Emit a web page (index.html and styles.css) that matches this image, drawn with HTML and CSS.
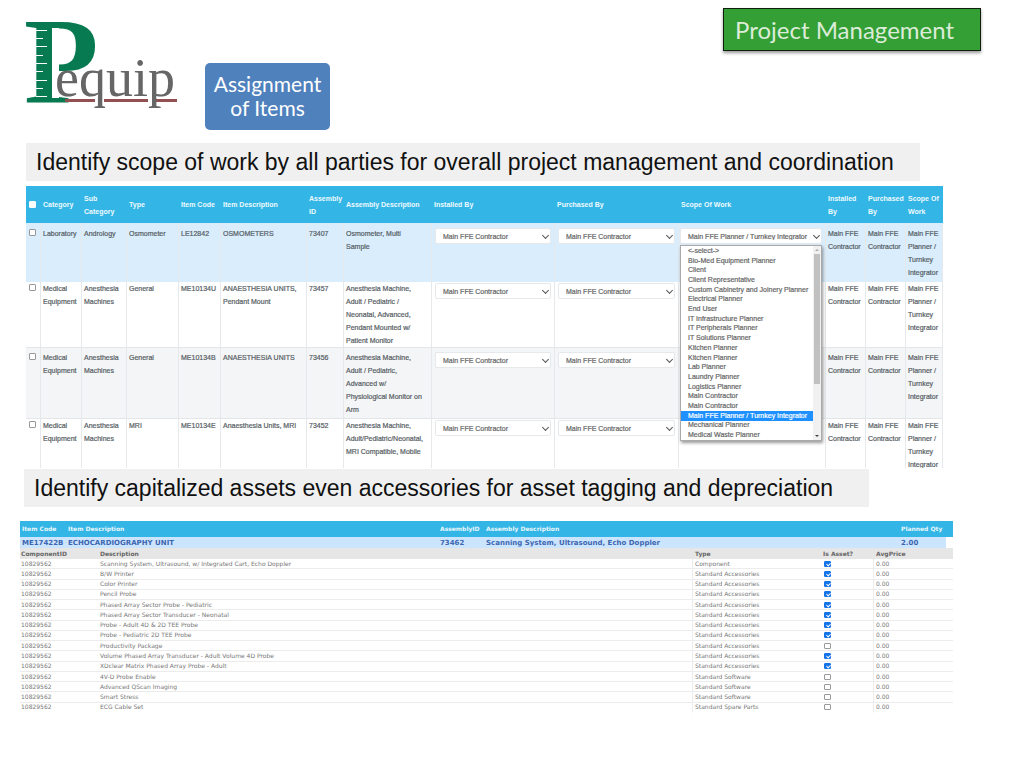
FILE: index.html
```html
<!DOCTYPE html>
<html lang="en">
<head>
<meta charset="utf-8">
<title>Pequip - Project Management</title>
<link rel="stylesheet" href="styles.css">
</head>
<body>
<header class="top">
  <svg class="logo" width="154" height="92" viewBox="24 20 154 92" role="img" aria-label="Pequip">
    <text class="logo-p" x="24" y="103">P</text>
    <g class="logo-ticks">
      <rect x="36" y="30" width="11" height="1"/><rect x="36" y="38" width="7" height="1"/>
      <rect x="36" y="46" width="11" height="1"/><rect x="36" y="55" width="7" height="1"/>
      <rect x="36" y="63" width="11" height="1"/><rect x="36" y="71" width="7" height="1"/>
      <rect x="36" y="80" width="11" height="1"/><rect x="36" y="88" width="7" height="1"/>
      <rect x="36" y="96" width="11" height="1"/><rect x="52" y="28" width="7" height="70"/>
    </g>
    <g class="logo-line">
      <rect x="65" y="99" width="30" height="3"/><rect x="104" y="99" width="44" height="3"/><rect x="155" y="99" width="22" height="3"/>
    </g>
    <text class="logo-word" x="55" y="96">equip</text>
  </svg>
  <h2 class="topic">Assignment<br>of Items</h2>
  <h1 class="banner">Project Management</h1>
</header>
<main>
  <p class="caption caption-scope">Identify scope of work by all parties for overall project management and coordination</p>
  <div class="scope-wrap">
    <table class="scope">
      <colgroup><col class="w15"><col class="w41"><col class="w45"><col class="w52"><col class="w42"><col class="w86"><col class="w37"><col class="w88"><col class="w123"><col class="w124"><col class="w147"><col class="w40"><col class="w40"><col class="w37"></colgroup>
      <thead>
        <tr><th><input type="checkbox" aria-label="Select all"></th><th>Category</th><th>Sub Category</th><th>Type</th><th>Item Code</th><th>Item Description</th><th>Assembly ID</th><th>Assembly Description</th><th>Installed By</th><th>Purchased By</th><th>Scope Of Work</th><th>Installed By</th><th>Purchased By</th><th>Scope Of Work</th></tr>
      </thead>
      <tbody>
        <tr class="picked roomy">
          <td><input type="checkbox" aria-label="Select LE12842"></td><td>Laboratory</td><td>Andrology</td><td>Osmometer</td><td>LE12842</td><td>OSMOMETERS</td><td>73407</td><td class="desc">Osmometer, Multi Sample</td>
          <td><div class="pick"><select aria-label="Installed by"><option>Main FFE Contractor</option></select></div></td>
          <td><div class="pick"><select aria-label="Purchased by"><option>Main FFE Contractor</option></select></div></td>
          <td class="open"><div class="pick"><select aria-label="Scope of work"><option>Main FFE Planner / Turnkey Integrator</option></select></div>
            <div class="menu">
              <ul role="listbox" aria-label="Scope of work options">
                <li role="option">&lt;-select-&gt;</li><li role="option">Bio-Med Equipment Planner</li><li role="option">Client</li><li role="option">Client Representative</li><li role="option">Custom Cabinetry and Joinery Planner</li><li role="option">Electrical Planner</li><li role="option">End User</li><li role="option">IT Infrastructure Planner</li><li role="option">IT Peripherals Planner</li><li role="option">IT Solutions Planner</li><li role="option">Kitchen Planner</li><li role="option">Kitchen Planner</li><li role="option">Lab Planner</li><li role="option">Laundry Planner</li><li role="option">Logistics Planner</li><li role="option">Main Contractor</li><li role="option">Main Contractor</li><li role="option" aria-selected="true" class="current">Main FFE Planner / Turnkey Integrator</li><li role="option">Mechanical Planner</li><li role="option">Medical Waste Planner</li>
              </ul>
              <div class="scroll"><i class="up"></i><i class="thumb"></i><i class="down"></i></div>
            </div>
          </td>
          <td>Main FFE Contractor</td><td>Main FFE Contractor</td><td>Main FFE Planner / Turnkey Integrator</td>
        </tr>
        <tr class="tight">
          <td><input type="checkbox" aria-label="Select ME10134U"></td><td>Medical Equipment</td><td>Anesthesia Machines</td><td>General</td><td>ME10134U</td><td>ANAESTHESIA UNITS, Pendant Mount</td><td>73457</td><td class="desc">Anesthesia Machine, Adult / Pediatric / Neonatal, Advanced, Pendant Mounted w/ Patient Monitor</td>
          <td><div class="pick"><select aria-label="Installed by"><option>Main FFE Contractor</option></select></div></td>
          <td><div class="pick"><select aria-label="Purchased by"><option>Main FFE Contractor</option></select></div></td>
          <td></td><td>Main FFE Contractor</td><td>Main FFE Contractor</td><td>Main FFE Planner / Turnkey Integrator</td>
        </tr>
        <tr class="shade roomy tall">
          <td><input type="checkbox" aria-label="Select ME10134B"></td><td>Medical Equipment</td><td>Anesthesia Machines</td><td>General</td><td>ME10134B</td><td>ANAESTHESIA UNITS</td><td>73456</td><td class="desc">Anesthesia Machine, Adult / Pediatric, Advanced w/ Physiological Monitor on Arm</td>
          <td><div class="pick"><select aria-label="Installed by"><option>Main FFE Contractor</option></select></div></td>
          <td><div class="pick"><select aria-label="Purchased by"><option>Main FFE Contractor</option></select></div></td>
          <td></td><td>Main FFE Contractor</td><td>Main FFE Contractor</td><td>Main FFE Planner / Turnkey Integrator</td>
        </tr>
        <tr class="tight">
          <td><input type="checkbox" aria-label="Select ME10134E"></td><td>Medical Equipment</td><td>Anesthesia Machines</td><td>MRI</td><td>ME10134E</td><td>Anaesthesia Units, MRI</td><td>73452</td><td class="desc">Anesthesia Machine, Adult/Pediatric/Neonatal, MRI Compatible, Mobile</td>
          <td><div class="pick"><select aria-label="Installed by"><option>Main FFE Contractor</option></select></div></td>
          <td><div class="pick"><select aria-label="Purchased by"><option>Main FFE Contractor</option></select></div></td>
          <td></td><td>Main FFE Contractor</td><td>Main FFE Contractor</td><td>Main FFE Planner / Turnkey Integrator</td>
        </tr>
      </tbody>
    </table>
  </div>
  <p class="caption caption-assets">Identify capitalized assets even accessories for asset tagging and depreciation</p>
  <section class="assets">
    <table class="unit">
      <colgroup><col class="w46"><col class="w372"><col class="w46"><col class="w415"><col class="w54"></colgroup>
      <thead><tr><th>Item Code</th><th>Item Description</th><th>AssemblyID</th><th>Assembly Description</th><th>Planned Qty</th></tr></thead>
      <tbody><tr><td>ME17422B</td><td>ECHOCARDIOGRAPHY UNIT</td><td>73462</td><td>Scanning System, Ultrasound, Echo Doppler</td><td>2.00</td></tr></tbody>
    </table>
    <table class="parts">
      <colgroup><col class="w78"><col class="w595"><col class="w128"><col class="w53"><col class="w79"></colgroup>
      <thead><tr><th>ComponentID</th><th>Description</th><th>Type</th><th>Is Asset?</th><th>AvgPrice</th></tr></thead>
      <tbody>
        <tr><td>10829562</td><td>Scanning System, Ultrasound, w/ Integrated Cart, Echo Doppler</td><td>Component</td><td><input type="checkbox" aria-label="Is asset" checked></td><td>0.00</td></tr>
        <tr><td>10829562</td><td>B/W Printer</td><td>Standard Accessories</td><td><input type="checkbox" aria-label="Is asset" checked></td><td>0.00</td></tr>
        <tr><td>10829562</td><td>Color Printer</td><td>Standard Accessories</td><td><input type="checkbox" aria-label="Is asset" checked></td><td>0.00</td></tr>
        <tr><td>10829562</td><td>Pencil Probe</td><td>Standard Accessories</td><td><input type="checkbox" aria-label="Is asset" checked></td><td>0.00</td></tr>
        <tr><td>10829562</td><td>Phased Array Sector Probe - Pediatric</td><td>Standard Accessories</td><td><input type="checkbox" aria-label="Is asset" checked></td><td>0.00</td></tr>
        <tr><td>10829562</td><td>Phased Array Sector Transducer - Neonatal</td><td>Standard Accessories</td><td><input type="checkbox" aria-label="Is asset" checked></td><td>0.00</td></tr>
        <tr><td>10829562</td><td>Probe - Adult 4D &amp; 2D TEE Probe</td><td>Standard Accessories</td><td><input type="checkbox" aria-label="Is asset" checked></td><td>0.00</td></tr>
        <tr><td>10829562</td><td>Probe - Pediatric 2D TEE Probe</td><td>Standard Accessories</td><td><input type="checkbox" aria-label="Is asset" checked></td><td>0.00</td></tr>
        <tr><td>10829562</td><td>Productivity Package</td><td>Standard Accessories</td><td><input type="checkbox" aria-label="Is asset"></td><td>0.00</td></tr>
        <tr><td>10829562</td><td>Volume Phased Array Transducer - Adult Volume 4D Probe</td><td>Standard Accessories</td><td><input type="checkbox" aria-label="Is asset" checked></td><td>0.00</td></tr>
        <tr><td>10829562</td><td>XDclear Matrix Phased Array Probe - Adult</td><td>Standard Accessories</td><td><input type="checkbox" aria-label="Is asset" checked></td><td>0.00</td></tr>
        <tr><td>10829562</td><td>4V-D Probe Enable</td><td>Standard Software</td><td><input type="checkbox" aria-label="Is asset"></td><td>0.00</td></tr>
        <tr><td>10829562</td><td>Advanced QScan Imaging</td><td>Standard Software</td><td><input type="checkbox" aria-label="Is asset"></td><td>0.00</td></tr>
        <tr><td>10829562</td><td>Smart Stress</td><td>Standard Software</td><td><input type="checkbox" aria-label="Is asset"></td><td>0.00</td></tr>
        <tr><td>10829562</td><td>ECG Cable Set</td><td>Standard Spare Parts</td><td><input type="checkbox" aria-label="Is asset"></td><td>0.00</td></tr>
      </tbody>
    </table>
  </section>
</main>
</body>
</html>
```
FILE: styles.css
```css
* { box-sizing: border-box; }
body { margin: 0; background: #fff; font-family: "Liberation Sans", Arial, sans-serif; color: #555; }

/* Top band */
.top { display: flex; align-items: flex-start; padding: 8px 41px 0 24px; min-height: 143px; }
.logo { margin-top: 12px; flex: none; overflow: visible; }
.logo-p { font: bold 122px "Liberation Serif", serif; fill: #087a52; }
.logo-word { font: 54px "Liberation Serif", serif; fill: #666; }
.logo-ticks { fill: #fff; }
.logo-line { fill: #935052; }
.topic { margin: 55px 0 0 27px; padding: 9px 0; width: 125px; height: 67px; border-radius: 5px; background: #4f81bd; color: #fff; font: 21px/24px Lato, sans-serif; text-align: center; }
.banner { margin: 0 0 0 auto; width: 258px; padding: 5px 11px; border: 1px solid #0c200c; background: #339f35; box-shadow: 0 2px 3px #0006; color: #dcecd8; font: 24px/31px Lato, sans-serif; white-space: nowrap; }

/* Section captions */
.caption { margin: 0; height: 38px; padding: 0 10px; background: #f0f0f0; color: #111; font-size: 23px; line-height: 38px; white-space: nowrap; }
.caption-scope { margin: 0 102px 5px 26px; }
.caption-assets { margin: 1px 153px 14px 24px; }

/* Scope of work table */
table { width: 100%; table-layout: fixed; border-collapse: separate; border-spacing: 0; }
th { text-align: left; }
.scope-wrap { margin: 0 79px 0 26px; max-height: 282px; overflow: hidden; }
.scope { font-size: 7px; line-height: 13px; color: #565d64; }
.scope th { height: 37px; padding: 0 0 0 2px; background: #33b5e5; color: #eefaff; vertical-align: middle; }
.scope td { height: 65px; padding: 0 0 0 2px; border-right: 1px solid #e6e9ec; vertical-align: top; -webkit-text-stroke: 0.2px; }
.scope th:first-child, .scope td:first-child { padding-left: 3px; }
.scope .desc { padding-right: 7px; }
.scope .roomy td { height: 59px; padding-top: 4px; }
.scope .tall td { height: 72px; border-top: 1px solid #e3e5e8; border-bottom: 1px solid #e3e5e8; padding-top: 3px; }
.picked td { background: #d9edfd; }
.shade td { background: #f4f5f7; }
input[type="checkbox"] { appearance: none; display: block; width: 7px; height: 7px; margin: 2px 0 0; border: 1px solid #999; border-radius: 1px; background: #fff; }
.scope th input { margin: 0; border-color: #fff; }

.pick { position: relative; margin: 1px 3px 0 1px; }
.pick select { display: block; width: 100%; height: 16px; padding: 0 7px; appearance: none; border: 1px solid #e6e9ec; border-radius: 2px; background: #fff; color: #666; font: 7px "Liberation Sans", Arial, sans-serif; }
.pick::after { content: ""; position: absolute; right: 3px; top: 5px; width: 4px; height: 4px; border: solid #555; border-width: 0 1px 1px 0; transform: rotate(45deg); }
.open { position: relative; }
.scope .open { padding-left: 1px; }
.open .pick { margin-left: 0; }
.menu { position: absolute; z-index: 2; left: 1px; right: 3px; top: 22px; height: 196px; display: flex; border: 1px solid #aaa; background: #fff; box-shadow: 1px 2px 3px #0006; color: #666; }
.menu ul { flex: 1; display: grid; grid-auto-rows: 1fr; margin: 0; padding: 0; list-style: none; }
.menu li { display: flex; align-items: center; min-height: 0; padding-left: 7px; line-height: 8px; white-space: nowrap; }
.menu .current { background: #1e90ff; color: #fff; }
.scroll { width: 8px; display: flex; flex-direction: column; align-items: center; background: #f1f1f1; }
.scroll i { display: block; }
.thumb { width: 6px; height: 130px; background: #c1c1c1; }
.up, .down { border: 2px solid transparent; }
.up { margin: 1px 0 3px; border-bottom-color: #aaa; }
.down { margin: auto 0 1px; border-top-color: #444; }

/* Asset tables */
.assets { margin: 0 69px 0 20px; font: 6px/8px "DejaVu Sans", Verdana, sans-serif; }
.assets th, .assets td { padding: 0 0 0 2px; white-space: nowrap; }
.unit th { height: 16px; background: #33b5e5; color: #e9f7fd; }
.unit td { height: 11px; background: #cce5ff; color: #3c66b0; font-size: 7px; font-weight: bold; }
.unit td:last-child { border-right: 7px solid #fff; }
.parts { height: 165px; color: #777; }
.parts th { height: 11px; background: #e6e6e6; color: #666; }
.parts td { border-bottom: 1px solid #ececec; }
.parts th:first-child, .parts td:first-child { padding-left: 1px; }
.parts td:nth-child(2), .parts td:nth-child(4) { border-right: 1px solid #ececec; }
.parts tr:last-child td { border-bottom-color: #fff; }
.parts input[type="checkbox"] { position: relative; width: 7px; height: 6px; margin: 0 0 0 1px; }
.parts input:checked { border-color: #1473e6; background: #1473e6; }
.parts input:checked::after { content: ""; position: absolute; left: 2px; top: 0; width: 2px; height: 3px; border: solid #fff; border-width: 0 1px 1px 0; transform: rotate(45deg); }

/* Column proportions */
.w15 { width: 15px; } .w37 { width: 37px; } .w40 { width: 40px; } .w41 { width: 41px; }
.w42 { width: 42px; } .w45 { width: 45px; } .w46 { width: 46px; } .w52 { width: 52px; }
.w53 { width: 53px; } .w54 { width: 54px; } .w78 { width: 78px; } .w79 { width: 79px; }
.w86 { width: 86px; } .w88 { width: 88px; } .w123 { width: 123px; } .w124 { width: 124px; }
.w128 { width: 128px; } .w147 { width: 147px; } .w372 { width: 372px; } .w415 { width: 415px; }
.w595 { width: 595px; }
```
